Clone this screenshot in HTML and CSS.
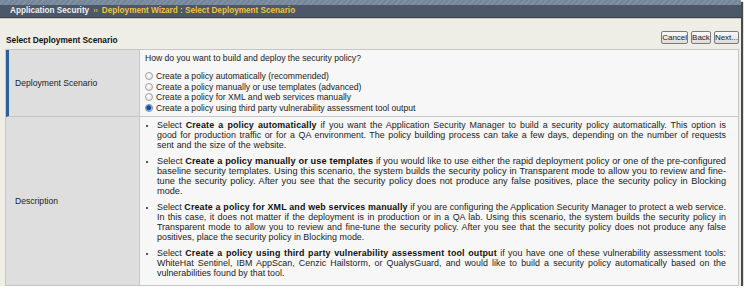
FILE: index.html
```html
<!DOCTYPE html>
<html>
<head>
<meta charset="utf-8">
<link rel="stylesheet" href="styles.css">
</head>
<body>
<div class="frame">
  <div class="stripe"></div>
  <div class="titlebar">
    <span class="app">Application Security</span>
    <span class="sep">&rsaquo;&rsaquo;</span>
    <span class="crumb">Deployment Wizard : Select Deployment Scenario</span>
  </div>
  <div class="content">
    <div class="toolbar">
      <div class="heading">Select Deployment Scenario</div>
      <div class="buttons">
        <button class="btn">Cancel</button>
        <button class="btn">Back</button>
        <button class="btn">Next...</button>
      </div>
    </div>
    <div class="props">
      <div class="label label-active">Deployment Scenario</div>
      <div class="value">
        <div class="question">How do you want to build and deploy the security policy?</div>
        <div class="options">
          <label class="opt"><span class="radio"></span>Create a policy automatically (recommended)</label>
          <label class="opt"><span class="radio"></span>Create a policy manually or use templates (advanced)</label>
          <label class="opt"><span class="radio"></span>Create a policy for XML and web services manually</label>
          <label class="opt"><span class="radio checked"></span>Create a policy using third party vulnerability assessment tool output</label>
        </div>
      </div>
      <div class="label">Description</div>
      <div class="value desc">
        <ul>
          <li class="wide">Select <b>Create a policy automatically</b> if you want the Application Security Manager to build a security policy automatically. This option is good for production traffic or for a QA environment. The policy building process can take a few days, depending on the number of requests sent and the size of the website.</li>
          <li class="loose">Select <b>Create a policy manually or use templates</b> if you would like to use either the rapid deployment policy or one of the pre-configured baseline security templates. Using this scenario, the system builds the security policy in Transparent mode to allow you to review and fine-tune the security policy. After you see that the security policy does not produce any false positives, place the security policy in Blocking mode.</li>
          <li>Select <b>Create a policy for XML and web services manually</b> if you are configuring the Application Security Manager to protect a web service. In this case, it does not matter if the deployment is in production or in a QA lab. Using this scenario, the system builds the security policy in Transparent mode to allow you to review and fine-tune the security policy. After you see that the security policy does not produce any false positives, place the security policy in Blocking mode.</li>
          <li>Select <b>Create a policy using third party vulnerability assessment tool output</b> if you have one of these vulnerability assessment tools: WhiteHat Sentinel, IBM AppScan, Cenzic Hailstorm, or QualysGuard, and would like to build a security policy automatically based on the vulnerabilities found by that tool.</li>
        </ul>
      </div>
    </div>
  </div>
</div>
</body>
</html>
```

FILE: styles.css
```css
html, body {
  margin: 0;
  padding: 0;
  background: #ffffff;
}
body {
  font-family: "Liberation Sans", Arial, sans-serif;
  color: #222;
}
.frame {
  width: 741px;
  height: 286px;
  background: #efeee6;
  box-shadow: 2px 2px 1px #4a4a4a;
  overflow: hidden;
  display: flex;
  flex-direction: column;
}
.stripe {
  height: 6px;
  background: repeating-linear-gradient(135deg, #74859a 0 2px, #7f90a3 2px 4px);
}
.titlebar {
  height: 16px;
  background: #4c5767;
  border-bottom: 1px solid #3a424e;
  box-shadow: 0 1px 0 #c9c8bf;
  display: flex;
  align-items: center;
  padding-left: 10px;
  font-size: 8.2px;
  font-weight: bold;
}
.app { color: #f2f2f2; }
.sep { color: #e0b43a; font-size: 7px; margin: 0 4px 0 4px; }
.crumb { color: #f0c53e; }
.content {
  padding: 0 2px 0 5px;
  flex: 1;
  display: flex;
  flex-direction: column;
}
.toolbar {
  display: flex;
  justify-content: space-between;
  align-items: center;
  height: 23px;
  margin-top: 7px;
}
.heading {
  font-size: 8.3px;
  font-weight: bold;
  color: #111;
  padding-left: 1px;
  padding-top: 6px;
}
.buttons {
  display: flex;
  gap: 3px;
  padding-top: 2px;
}
.btn {
  font-family: "Liberation Sans", Arial, sans-serif;
  font-size: 8px;
  height: 13px;
  padding: 0;
  border: 1px solid #7b7b7b;
  border-radius: 2px;
  background: linear-gradient(#fbfbfb, #dcdcdc);
  color: #222;
  line-height: 11px;
}
.props {
  display: grid;
  grid-template-columns: 134px 1fr;
  grid-template-rows: 67px 168px;
  border: 1px solid #c6c6c6;
  margin-top: 1px;
}
.label {
  background: #dedede;
  border-right: 1px solid #c6c6c6;
  border-left: 3px solid #dedede;
  font-size: 8.6px;
  color: #222;
  display: flex;
  align-items: center;
  padding-left: 6px;
}
.label-active {
  border-left-color: #2d5f9c;
}
.props .label:nth-of-type(1),
.props .value:nth-of-type(2) {
  border-bottom: 1px solid #c6c6c6;
}
.value {
  background: #f7f7f7;
  font-size: 8.6px;
  padding-left: 5px;
}
.question {
  margin-top: 3px;
}
.options {
  margin-top: 8px;
  display: flex;
  flex-direction: column;
}
.opt {
  display: flex;
  align-items: center;
  height: 10.5px;
}
.radio {
  width: 8px;
  height: 8px;
  border-radius: 50%;
  border: 1px solid #a0a0a0;
  background: radial-gradient(circle at 40% 35%, #ffffff, #dcdcdc);
  margin-right: 3px;
  box-sizing: border-box;
}
.radio.checked {
  background: radial-gradient(circle at 45% 45%, #0e4f9a 0 2px, #5b8fcf 2.5px, #e8eef6 3.5px);
  border-color: #6a8bb5;
}
.desc {
  padding: 3px 12px 0 0;
}
.desc ul {
  margin: 0;
  padding-left: 17px;
  font-size: 8.9px;
  line-height: 10px;
  text-align: justify;
  letter-spacing: 0.02px;
}
.desc li {
  margin-bottom: 6px;
}
.desc li.wide {
  word-spacing: 0.3px;
}
.desc li.loose {
  font-size: 9.2px;
  letter-spacing: 0;
}
.desc li.loose b {
  letter-spacing: 0.1px;
}
.desc li::marker {
  font-size: 7px;
}
.desc b {
  color: #111;
  letter-spacing: 0.15px;
}
```
